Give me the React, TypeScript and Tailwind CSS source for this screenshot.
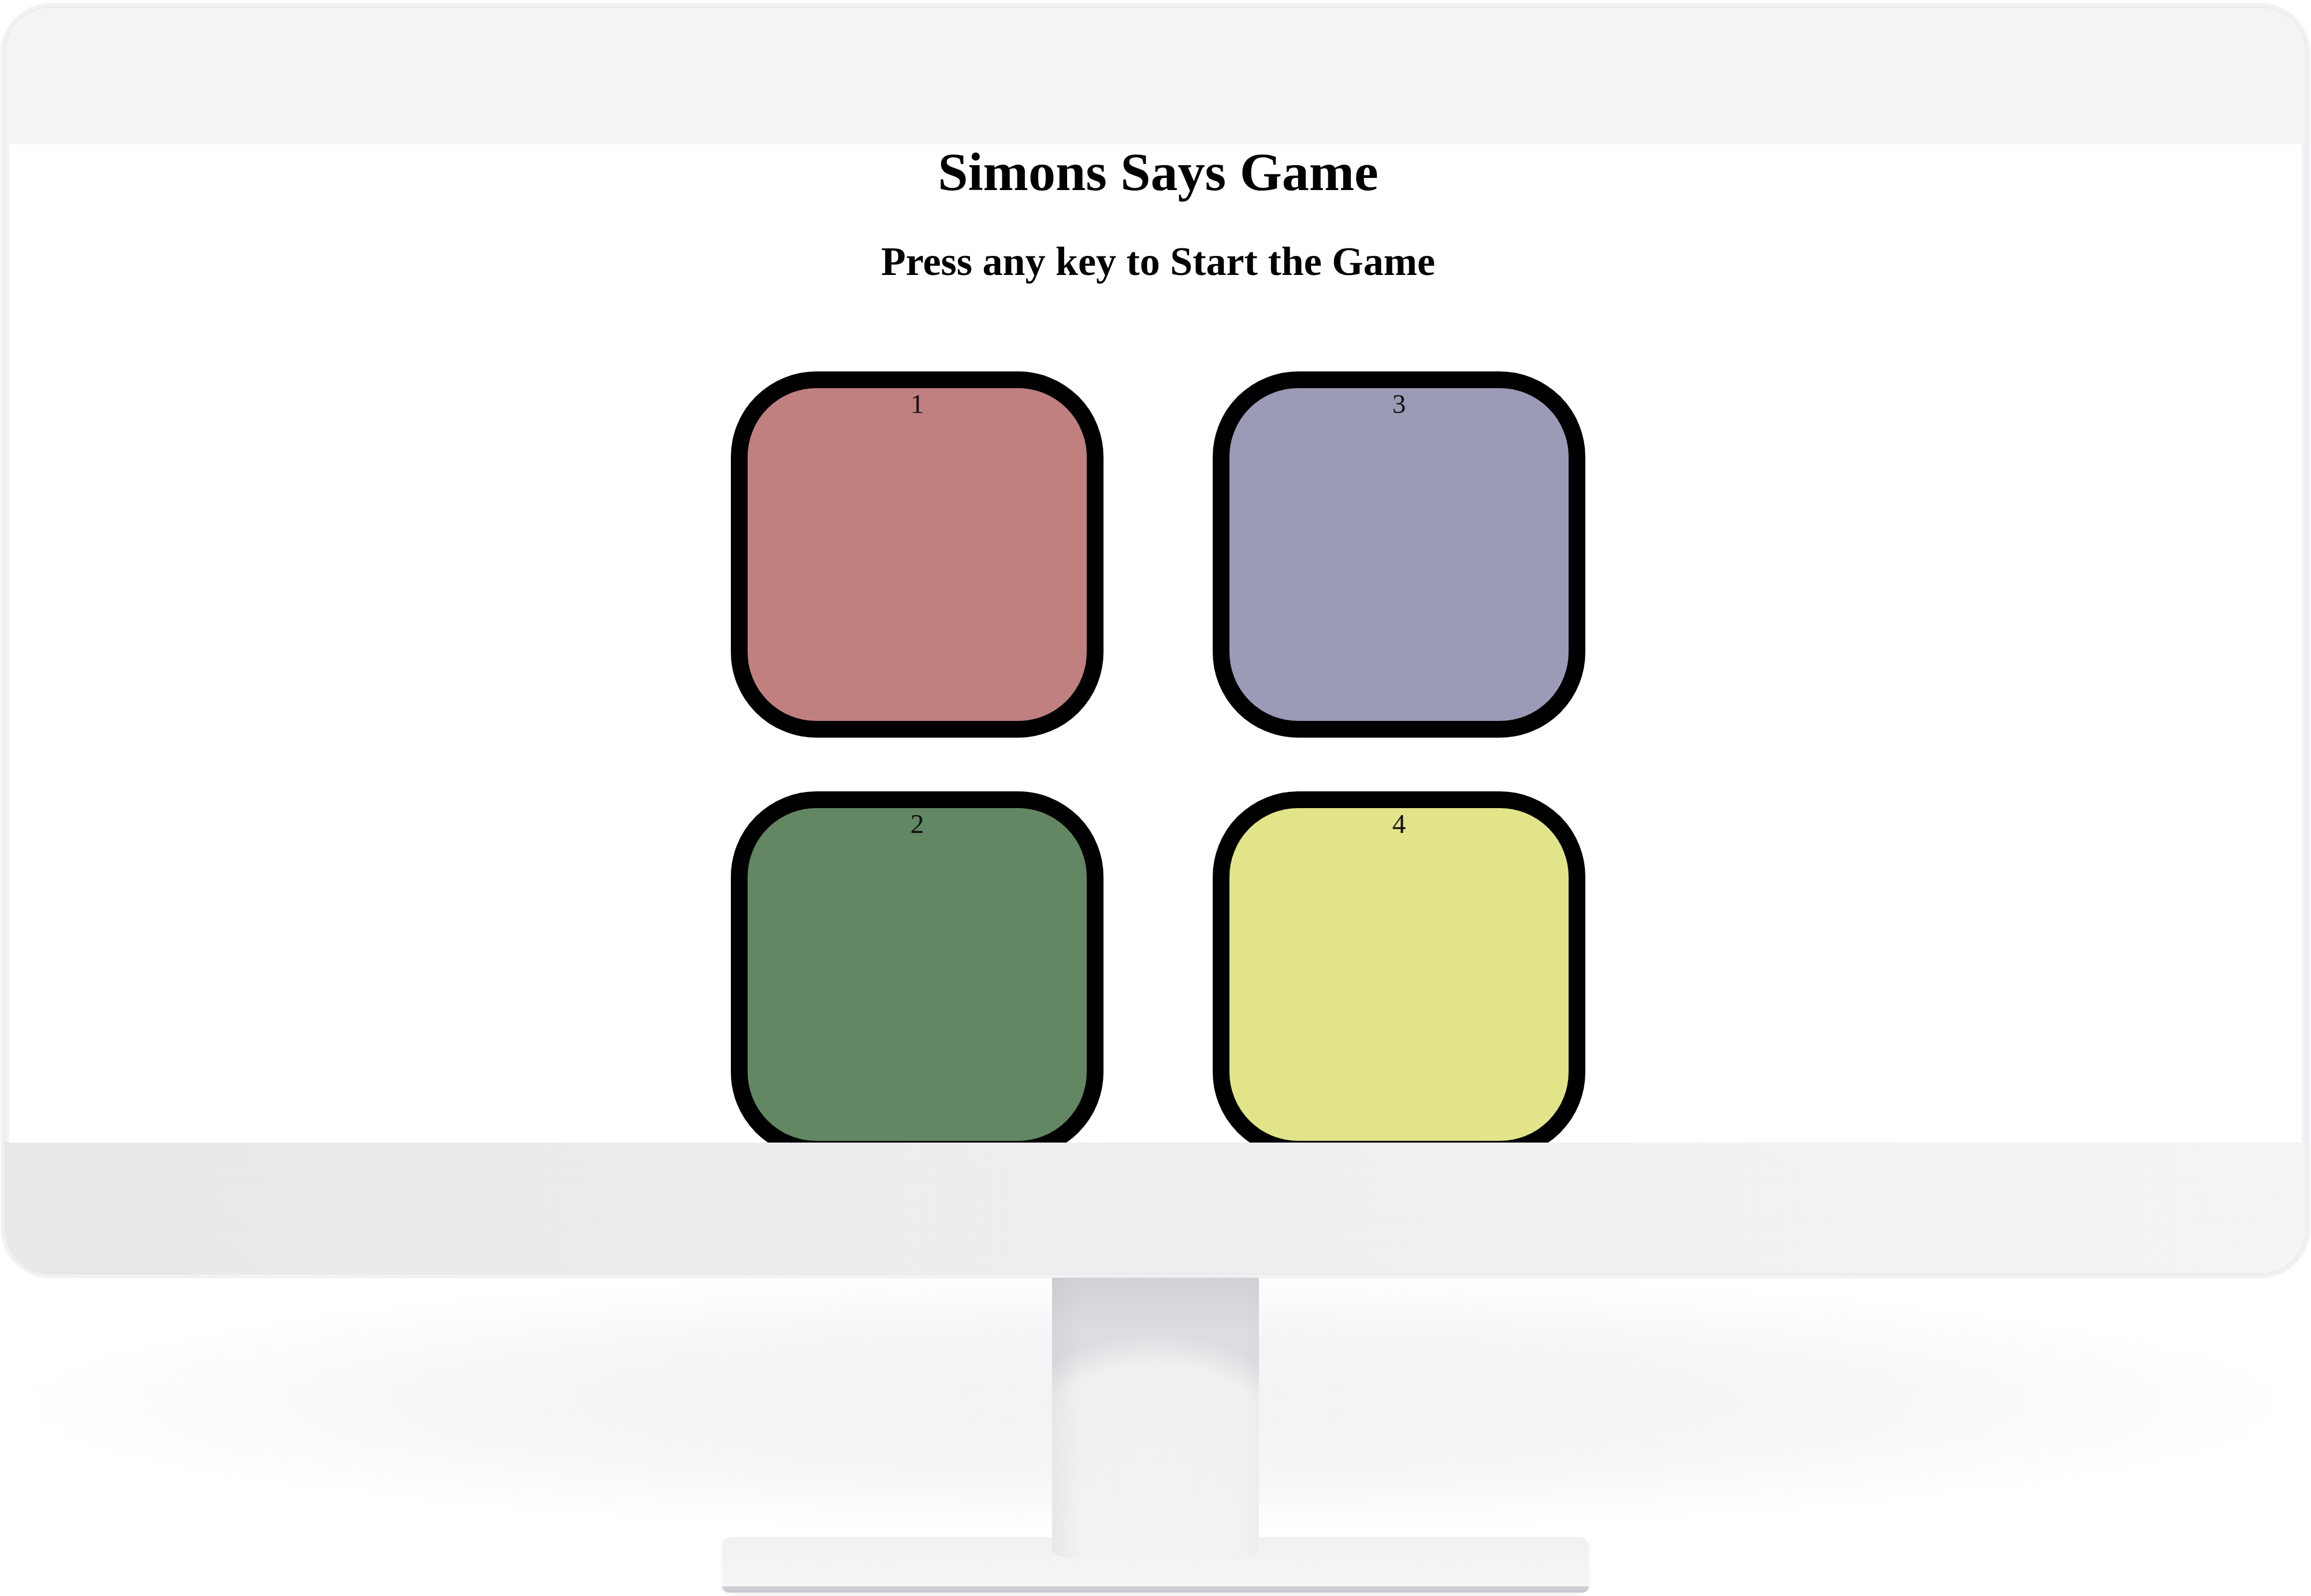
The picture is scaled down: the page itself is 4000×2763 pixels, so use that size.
const tiles = [
  { id: 1, color: "bg-[#c08080]" },
  { id: 3, color: "bg-[#9b9bb7]" },
  { id: 2, color: "bg-[#628762]" },
  { id: 4, color: "bg-[#e2e48a]" },
];

function Tile({ id, color }) {
  return (
    <div
      className={`h-[634px] w-[645px] rounded-[148px] border-[29px] border-black ${color} text-center text-[47px] leading-[normal] text-[#111]`}
    >
      {id}
    </div>
  );
}

function Screen() {
  return (
    <div className="mx-[7px] h-[1728px] bg-white pl-[9px] text-center text-black">
      <h1 className="text-[94px] font-bold leading-[94px]">Simons Says Game</h1>
      <h2 className="mt-[74px] text-[70px] font-bold leading-[70px]">
        Press any key to Start the Game
      </h2>
      {/* board is cut by the bottom of the screen */}
      <div className="mt-[155px] h-[1335px] overflow-hidden">
        <div className="grid grid-cols-[645px_645px] justify-center gap-x-[189px] gap-y-[93px]">
          {tiles.map((t) => (
            <Tile key={t.id} id={t.id} color={t.color} />
          ))}
        </div>
      </div>
    </div>
  );
}

function Monitor() {
  return (
    <div className="relative z-10 mt-[6px] h-[2206px] w-[3996px] rounded-[86px] bg-[#f1f1f3] p-[6px] shadow-[0_0_4px_rgba(0,0,0,0.07)]">
      <div className="flex h-full flex-col overflow-hidden rounded-[80px] border border-[#e2e2e6] bg-[#f3f3f5]">
        {/* top bezel */}
        <div className="h-[237px] shrink-0 bg-[#f4f4f5]" />
        <Screen />
        {/* chin */}
        <div className="flex-1 bg-[linear-gradient(90deg,#e8e8eb_0%,#eeeef0_45%,#f4f4f5_100%)]" />
      </div>
    </div>
  );
}

function Stand() {
  return (
    <div className="flex w-full flex-1 flex-col items-center bg-[radial-gradient(ellipse_1980px_230px_at_50%_215px,#f2f3f4_0%,#f4f5f6_50%,#ffffff_100%)]">
      {/* neck */}
      <div className="relative z-10 h-[485px] w-[358px] rounded-b-[40px_14px] bg-[linear-gradient(90deg,rgba(120,120,135,0.08)_0%,rgba(120,120,135,0)_14%,rgba(120,120,135,0)_92%,rgba(120,120,135,0.03)_100%),linear-gradient(180deg,rgba(170,170,182,0.22)_0px,rgba(170,170,182,0)_90px),radial-gradient(363px_390px_at_50%_100%,#f3f3f5_0%,#f0f0f2_86%,#dcdce1_100%)]" />
      {/* base */}
      <div className="-mt-[36px] flex w-[1500px] flex-col rounded-b-[30px] shadow-[0_6px_10px_rgba(0,0,0,0.05)]">
        <div className="h-[82px] rounded-t-[14px] bg-[linear-gradient(180deg,#f1f1f3_0%,#f5f5f6_100%)]" />
        <div className="h-[3px] bg-[#f8f8f9]" />
        <div className="h-[11px] rounded-b-[30px] bg-[linear-gradient(180deg,#d2d2d9_0%,#c6c6ce_100%)]" />
      </div>
    </div>
  );
}

export default function App() {
  return (
    <div className="flex h-[2763px] w-[4000px] flex-col items-center overflow-hidden bg-white font-['Liberation_Serif',serif]">
      <Monitor />
      <Stand />
    </div>
  );
}
